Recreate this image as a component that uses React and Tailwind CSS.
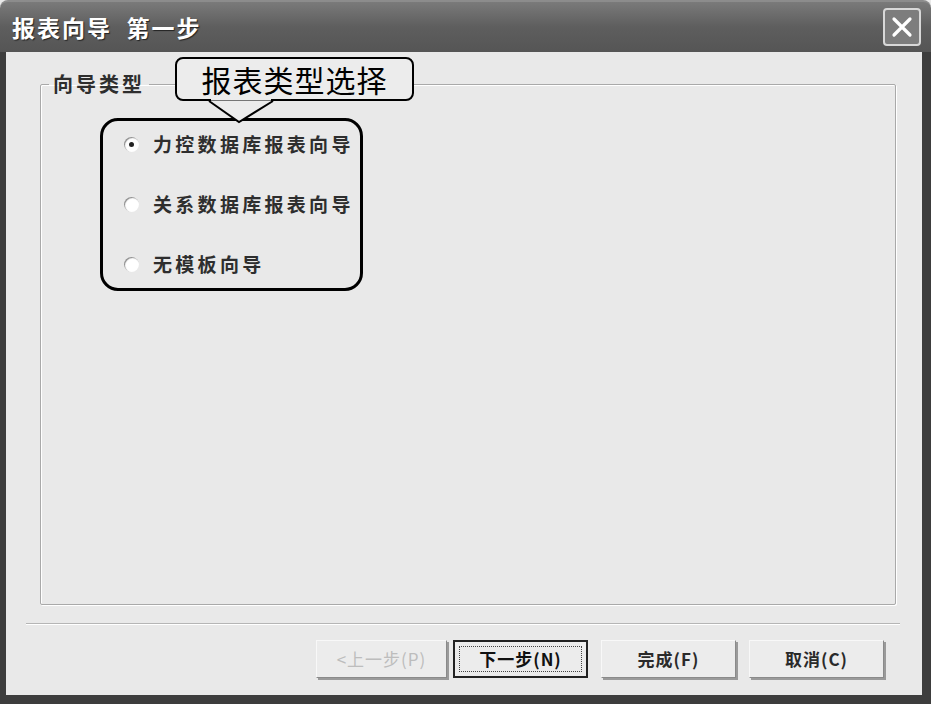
import React from "react";

const font = { fontFamily: '"Noto Sans CJK SC", "Noto Sans", sans-serif' };

function Radio({ checked, label }) {
  return (
    <div className="flex items-center gap-[14px] h-[26px]">
      <span className="relative w-[15px] h-[15px] rounded-full bg-white shadow-[inset_1px_1px_1px_#8a8a8a] flex items-center justify-center">
        {checked && <span className="w-[5px] h-[5px] rounded-full bg-[#222]" />}
      </span>
      <span className="text-[19px] font-bold text-[#2e2e2e] tracking-[3.3px]">{label}</span>
    </div>
  );
}

function Btn({ children, disabled, primary, w }) {
  return (
    <button
      className={
        "h-[38px] flex items-center justify-center text-[17px] font-bold bg-[#ececec] tracking-[1px] " +
        w +
        (primary
          ? " border-2 border-[#222] p-[4px]"
          : " border border-t-[#f8f8f8] border-l-[#f8f8f8] border-r-[#8a8a8a] border-b-[#8a8a8a] shadow-[2px_2px_0_#9a9a9a]")
      }
    >
      {primary ? (
        <span className="w-full h-full flex items-center justify-center border border-dotted border-[#444] text-[#111]">
          {children}
        </span>
      ) : (
        <span className={disabled ? "text-[#bdbdbd] font-normal" : "text-[#2a2a2a]"}>{children}</span>
      )}
    </button>
  );
}

export default function App() {
  return (
    <div className="w-[931px] h-[704px] bg-[#e9e9e9] flex flex-col overflow-hidden" style={font}>
      {/* Title bar */}
      <div className="h-[52px] shrink-0 rounded-t-[8px] bg-gradient-to-b from-[#7a7a7a] via-[#5e5e5e] to-[#555] border-t-2 border-[#8c8c8c] flex items-center justify-between pl-[12px] pr-[10px]">
        <span className="text-white text-[23px] font-bold tracking-[2px] [text-shadow:1px_1px_1px_#222]">
          报表向导&nbsp;&nbsp;第一步
        </span>
        <span className="w-[38px] h-[38px] rounded-[4px] border-2 border-[#d8d8d8] bg-[#7d7d7d] flex items-center justify-center">
          <svg width="24" height="24" viewBox="0 0 24 24">
            <path d="M4 4 L20 20 M20 4 L4 20" stroke="#fff" strokeWidth="3.2" strokeLinecap="round" />
          </svg>
        </span>
      </div>

      {/* Body */}
      <div className="flex-1 border-l-[6px] border-r-[9px] border-b-[9px] border-[#3d3d3d] flex flex-col relative">
        <fieldset className="mt-[17px] ml-[34px] w-[856px] h-[536px] border border-[#a9a9a9] shadow-[1px_1px_0_#fff,inset_1px_1px_0_#fff] rounded-[2px]">
          <legend className="ml-[8px] px-[4px] text-[20px] font-bold text-[#2e2e2e] tracking-[3px]">向导类型</legend>
          <div className="mt-[19px] ml-[59px] w-[263px] h-[173px] border-[3px] border-black rounded-[18px] pl-[21px] pt-[10px] flex flex-col gap-[34px]">
            <Radio checked label="力控数据库报表向导" />
            <Radio label="关系数据库报表向导" />
            <Radio label="无模板向导" />
          </div>
        </fieldset>

        {/* Callout */}
        <div className="absolute left-[169px] top-[5px] w-[239px] h-[44px] bg-[#ececec] border-2 border-black rounded-[8px] flex items-center justify-center">
          <span className="text-[30px] leading-none text-black tracking-[1px]" style={{ fontFamily: '"Noto Sans CJK SC", serif' }}>
            报表类型选择
          </span>
          <svg className="absolute left-[30px] top-[40px]" width="68" height="26" viewBox="0 0 68 26">
            <path d="M2 2 L32 23 L66 2" fill="#ececec" stroke="#000" strokeWidth="2" />
            <path d="M4 0 L64 0" stroke="#ececec" strokeWidth="3" />
          </svg>
        </div>

        {/* Separator */}
        <div className="mt-[18px] ml-[20px] w-[874px] h-[2px] border-t border-[#b5b5b5] border-b border-b-white" />

        {/* Buttons */}
        <div className="mt-[15px] ml-[310px] flex">
          <Btn disabled w="w-[131px]">&lt;上一步(P)</Btn>
          <div className="w-[6px]" />
          <Btn primary w="w-[135px]">下一步(N)</Btn>
          <div className="w-[13px]" />
          <Btn w="w-[135px]">完成(F)</Btn>
          <div className="w-[13px]" />
          <Btn w="w-[135px]">取消(C)</Btn>
        </div>
      </div>
    </div>
  );
}
